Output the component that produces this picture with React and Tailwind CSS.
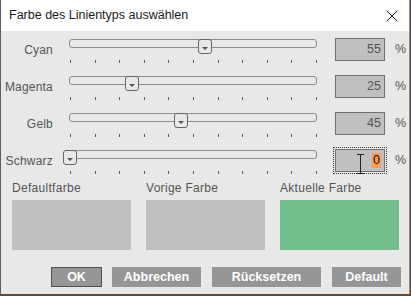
import React from 'react';

const rows = [
  { label: 'Cyan', value: 55 },
  { label: 'Magenta', value: 25 },
  { label: 'Gelb', value: 45 },
  { label: 'Schwarz', value: 0, focused: true },
];

const swatches = [
  { label: 'Defaultfarbe', color: 'bg-[#c0c0c0]' },
  { label: 'Vorige Farbe', color: 'bg-[#c0c0c0]' },
  { label: 'Aktuelle Farbe', color: 'bg-[#72bf8b]' },
];

const ticks = Array.from({ length: 11 });

function Slider({ value }) {
  return (
    <div className="relative ml-[10px] h-full w-[260px]">
      <div className="ml-[6px] mt-[1px] h-[9px] w-[248px] rounded-[3px] border border-[#8c8c8c]" />
      <div className="ml-[7px] mt-[12px] flex w-[247px] justify-between">
        {ticks.map((_, i) => (
          <div key={i} className="h-[3px] w-px bg-[#5a5a5a]" />
        ))}
      </div>
      {/* thumb */}
      <div
        className="absolute top-[1px] flex h-[15px] w-[14px] items-end justify-center rounded-[3px] border border-[#666] bg-[#e8e8e8] pb-[3px]"
        style={{ left: value * 2.46 }}
      >
        <svg width="6" height="3" viewBox="0 0 6 3">
          <polygon points="0,0 6,0 3,3" fill="#555" />
        </svg>
      </div>
    </div>
  );
}

export default function App() {
  return (
    <div className="h-[296px] w-[411px] overflow-hidden bg-[#5e4a3a]" style={{ fontFamily: '"Liberation Sans", Arial, sans-serif' }}>
      <div className="h-[294px] w-[410px] border-l border-r border-l-[#5f5f5f] border-r-[#8a8a8a] bg-[#e8e8e8]">
        {/* title bar */}
        <div className="flex h-[31px] items-center justify-between bg-white pl-[8px] pr-[6px]">
          <span className="text-[12.5px] text-[#1a1a1a]">Farbe des Linientyps auswählen</span>
          <svg width="12" height="12" viewBox="0 0 12 12" className="mr-[5px]">
            <path d="M0.5 0.5 L11.5 11.5 M11.5 0.5 L0.5 11.5" stroke="#222" strokeWidth="1" />
          </svg>
        </div>

        {/* rows */}
        <div className="flex flex-col gap-[14px] pt-[7px]">
          {rows.map((r) => (
            <div key={r.label} className="flex h-[23px] items-center">
              <div className="w-[52px] text-right text-[12px] leading-none tracking-[0.2px] text-[#555]">{r.label}</div>
              <Slider value={r.value} />
              <div
                className={
                  'relative ml-[12px] flex h-[23px] w-[50px] items-center justify-end border border-[#707070] bg-[#c0c0c0] pr-[3px] text-[12.5px] text-[#555] ' +
                  (r.focused ? 'outline outline-1 outline-dotted outline-offset-[1px] outline-[#333]' : '')
                }
              >
                {r.focused ? (
                  <>
                    <svg width="7" height="20" viewBox="0 0 7 20" className="absolute left-[21px] top-[4px]">
                      <path d="M0 0.5 H7 M3.5 0.5 V19.5 M0 19.5 H7" stroke="#222" strokeWidth="1" fill="none" />
                    </svg>
                    <span className="bg-[#ff9a52] px-[1px] leading-[15px] text-[#111]">0</span>
                  </>
                ) : (
                  r.value
                )}
              </div>
              <div className="ml-[10px] text-[12.5px] text-[#555]">%</div>
            </div>
          ))}
        </div>

        {/* swatches */}
        <div className="mt-[9px] flex gap-[15px] pl-[11px]">
          {swatches.map((s) => (
            <div key={s.label} className="w-[119px]">
              <div className="text-[12px] leading-[15px] tracking-[0.3px] text-[#555]">{s.label}</div>
              <div className={'mt-[4px] h-[50px] w-[119px] ' + s.color} />
            </div>
          ))}
        </div>

        {/* buttons */}
        <div className="mt-[17px] flex pl-[50px] text-[12.5px] font-bold text-white">
          <div className="flex h-[20px] w-[51px] items-center justify-center border border-[#505050] bg-[#969696]">OK</div>
          <div className="ml-[10px] flex h-[20px] w-[89px] items-center justify-center bg-[#969696]">Abbrechen</div>
          <div className="ml-[11px] flex h-[20px] w-[109px] items-center justify-center bg-[#969696]">Rücksetzen</div>
          <div className="ml-[11px] flex h-[20px] w-[69px] items-center justify-center bg-[#969696]">Default</div>
        </div>
      </div>
    </div>
  );
}
